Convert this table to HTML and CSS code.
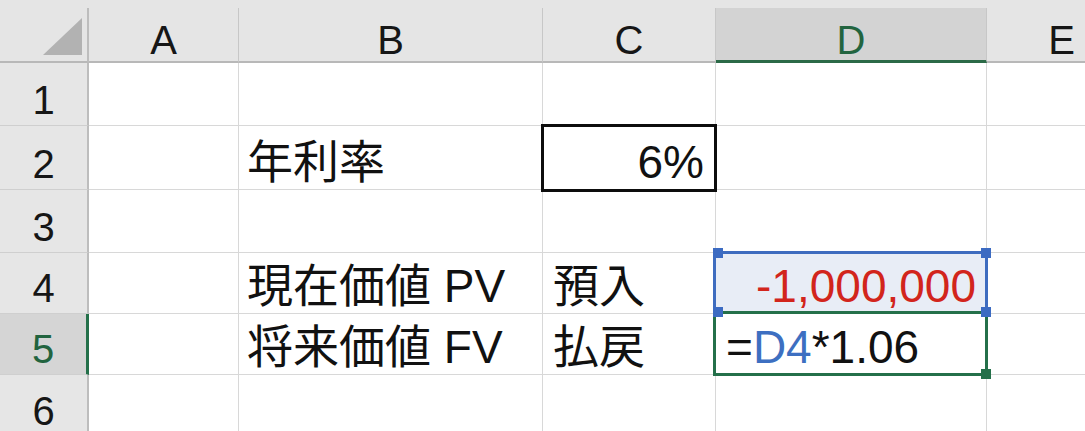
FILE: index.html
```html
<!DOCTYPE html>
<html lang="ja">
<head>
<meta charset="utf-8">
<title>Sheet</title>
<link rel="stylesheet" href="styles.css">
</head>
<body>
<div class="sheet">
  <div class="hdr-row">
    <div class="corner">
      <svg class="corner-tri" width="87" height="55" viewBox="0 0 87 55"><polygon points="43,47 82,47 82,10" fill="#b2b2b2"/></svg>
    </div>
    <div class="ch col-a">A</div>
    <div class="ch col-b">B</div>
    <div class="ch col-c">C</div>
    <div class="ch col-d ch-active">D</div>
    <div class="ch col-e">E</div>
  </div>

  <div class="row h1">
    <div class="rh">1</div>
    <div class="cell col-a"></div>
    <div class="cell col-b"></div>
    <div class="cell col-c"></div>
    <div class="cell col-d"></div>
    <div class="cell col-e"></div>
  </div>

  <div class="row h2">
    <div class="rh">2</div>
    <div class="cell col-a"></div>
    <div class="cell col-b">年利率</div>
    <div class="cell col-c num boxed">6%<span class="box-outline"></span></div>
    <div class="cell col-d"></div>
    <div class="cell col-e"></div>
  </div>

  <div class="row h3">
    <div class="rh">3</div>
    <div class="cell col-a"></div>
    <div class="cell col-b"></div>
    <div class="cell col-c"></div>
    <div class="cell col-d"></div>
    <div class="cell col-e"></div>
  </div>

  <div class="row h4">
    <div class="rh">4</div>
    <div class="cell col-a"></div>
    <div class="cell col-b">現在価値 PV</div>
    <div class="cell col-c pad-c">預入</div>
    <div class="cell col-d num ref-cell">
      <span class="neg">-1,000,000</span>
      <span class="ref-outline"></span>
      <span class="handle h-tl"></span>
      <span class="handle h-tr"></span>
      <span class="handle h-bl"></span>
      <span class="handle h-br"></span>
    </div>
    <div class="cell col-e"></div>
  </div>

  <div class="row h5">
    <div class="rh rh-active">5</div>
    <div class="cell col-a"></div>
    <div class="cell col-b">将来価値 FV</div>
    <div class="cell col-c pad-c">払戻</div>
    <div class="cell col-d active-cell">
      <span>=<span class="ref">D4</span>*1.06</span>
      <span class="active-outline"></span>
      <span class="fill-handle"></span>
    </div>
    <div class="cell col-e"></div>
  </div>

  <div class="row h6">
    <div class="rh">6</div>
    <div class="cell col-a"></div>
    <div class="cell col-b"></div>
    <div class="cell col-c"></div>
    <div class="cell col-d"></div>
    <div class="cell col-e"></div>
  </div>
</div>
</body>
</html>
```

FILE: styles.css
```css
* {
  box-sizing: border-box;
}

html, body {
  margin: 0;
  padding: 0;
  background: #ffffff;
  overflow: hidden;
}

.sheet {
  width: 1085px;
  height: 431px;
  overflow: hidden;
  font-family: "Liberation Sans", "Noto Sans CJK JP", sans-serif;
  color: #111111;
}

/* header row */
.hdr-row {
  display: flex;
  padding-top: 8px;
  background: #e5e5e5;
  width: 1200px;
}

.corner {
  width: 89px;
  height: 55px;
  flex-shrink: 0;
  border-right: 2px solid #bdbdbd;
  border-bottom: 2px solid #b8b8b8;
}

.corner-tri {
  display: block;
}

.ch {
  height: 55px;
  flex-shrink: 0;
  display: flex;
  align-items: flex-end;
  justify-content: center;
  padding-bottom: 1px;
  font-size: 40px;
  line-height: 1;
  color: #161616;
  border-right: 1px solid #c7c7c7;
  border-bottom: 2px solid #b8b8b8;
}

.ch-active {
  background: #d3d3d3;
  color: #22643f;
  border-bottom: 3px solid #2b6a47;
  padding-bottom: 0;
}

.col-a { width: 150px; }
.col-b { width: 304px; }
.col-c { width: 173px; }
.col-d { width: 271px; }
.col-e { width: 150px; }

/* body rows */
.row {
  display: flex;
  width: 1200px;
}

.h1 { height: 63px; }
.h2 { height: 64px; }
.h3 { height: 63px; }
.h4 { height: 61px; }
.h5 { height: 61px; }
.h6 { height: 62px; }

.rh {
  width: 89px;
  flex-shrink: 0;
  display: flex;
  align-items: flex-end;
  justify-content: center;
  padding-bottom: 5px;
  font-size: 40px;
  line-height: 1;
  color: #161616;
  background: #e6e6e6;
  border-right: 2px solid #bdbdbd;
  border-bottom: 1px solid #cfcfcf;
}

.rh-active {
  background: #d5d5d5;
  color: #22643f;
  border-right: 3px solid #24704a;
}

.cell {
  position: relative;
  flex-shrink: 0;
  display: flex;
  align-items: flex-end;
  padding: 0 8px 4px 8px;
  font-size: 46px;
  line-height: 1;
  white-space: nowrap;
  border-right: 1px solid #d8d8d8;
  border-bottom: 1px solid #d8d8d8;
}

.pad-c {
  padding-left: 10px;
}

.num {
  justify-content: flex-end;
  padding-right: 10px;
}

.boxed {
  padding-right: 11px;
}

.box-outline {
  position: absolute;
  left: -2px;
  right: -2px;
  top: -2px;
  bottom: -3px;
  border: 3px solid #0d0d0d;
  z-index: 1;
}

/* referenced cell D4 */
.ref-cell {
  background: #e8edf6;
}

.neg {
  color: #d2251c;
}

.ref-outline {
  position: absolute;
  left: -3px;
  right: -2px;
  top: -2px;
  bottom: -1px;
  border: 3px solid #3e6cbf;
  border-bottom: none;
  z-index: 1;
}

.handle {
  position: absolute;
  width: 10px;
  height: 10px;
  background: #3c6bc2;
  z-index: 3;
}

.h-tl { left: -3px; top: -5px; }
.h-tr { right: -5px; top: -5px; }
.h-bl { left: -3px; bottom: -4px; }
.h-br { right: -5px; bottom: -4px; }

/* active cell D5 */
.active-cell {
  padding-left: 10px;
}

.ref {
  color: #3d6fc1;
}

.active-outline {
  position: absolute;
  left: -3px;
  right: -2px;
  top: -3px;
  bottom: -2px;
  border: 3px solid #24704a;
  z-index: 2;
}

.fill-handle {
  position: absolute;
  right: -5px;
  bottom: -5px;
  width: 10px;
  height: 10px;
  background: #24704a;
  z-index: 3;
}
```
